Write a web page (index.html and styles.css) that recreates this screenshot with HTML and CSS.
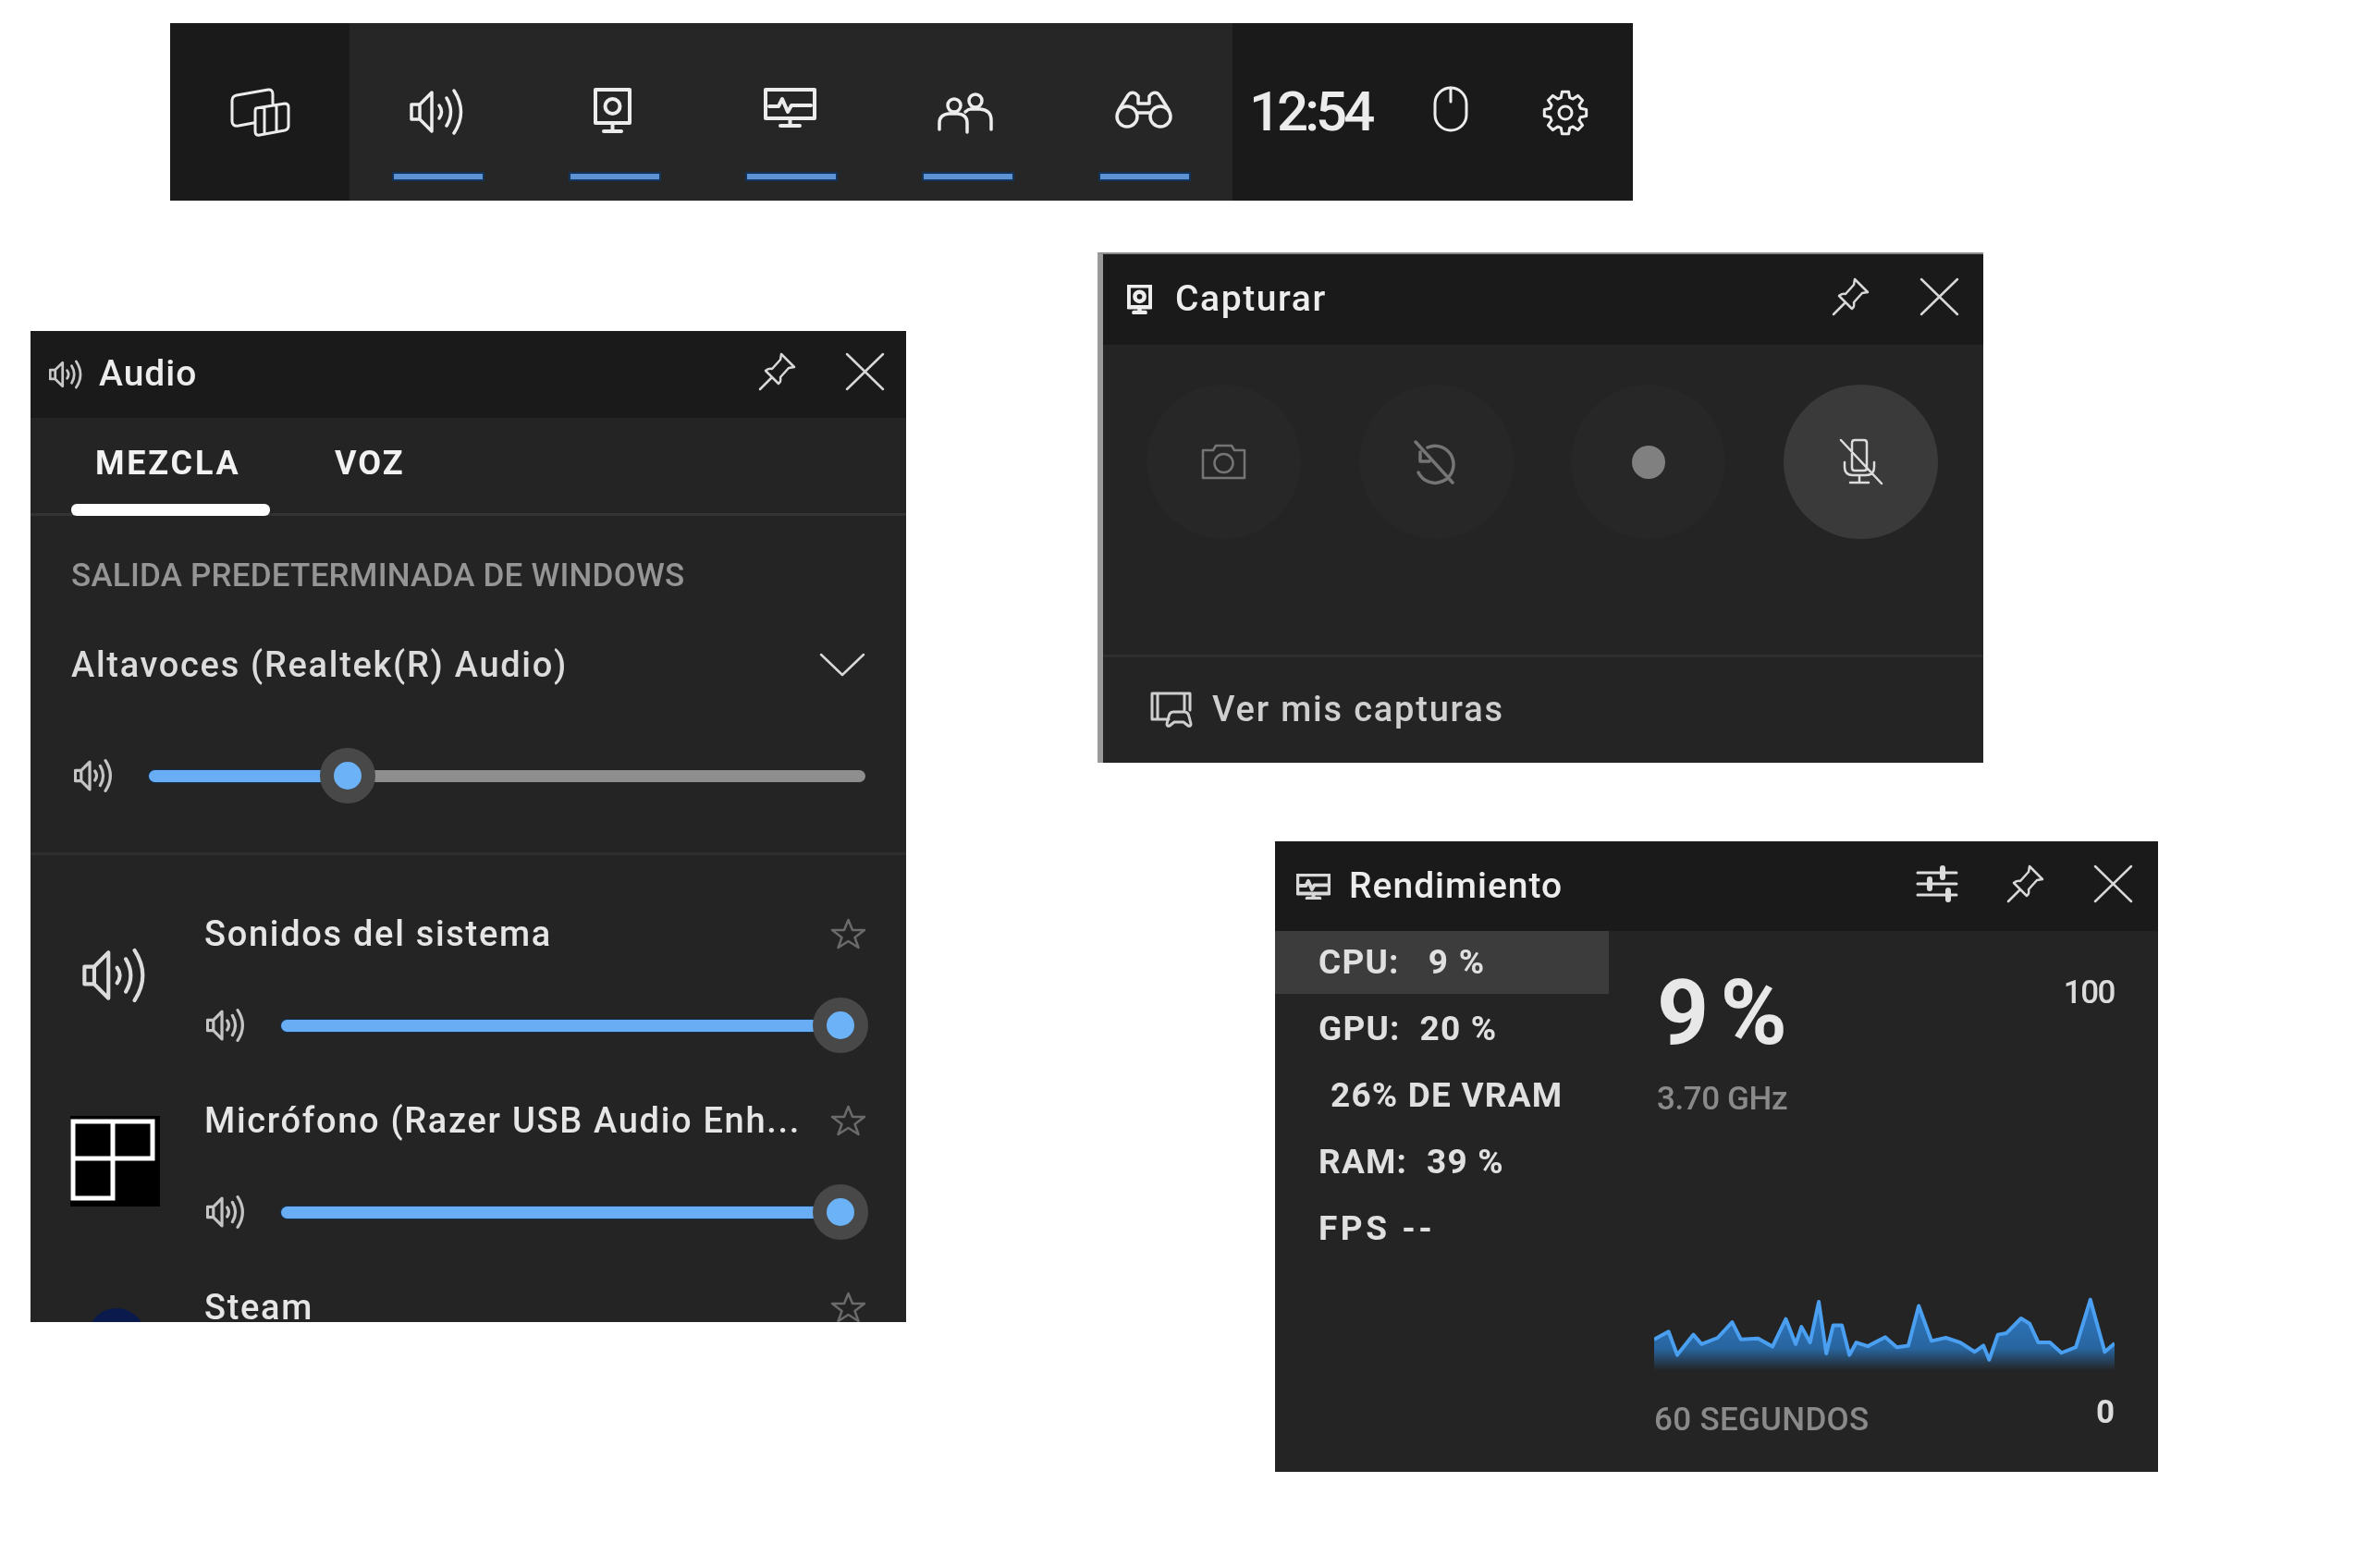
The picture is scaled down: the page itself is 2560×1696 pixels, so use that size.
FILE: index.html
```html
<!DOCTYPE html>
<html>
<head>
  <meta charset="utf-8">
  <title>Game Bar</title>
  <link rel="stylesheet" href="styles.css">
</head>
<body>
  <svg class="icon-defs" width="0" height="0">
    <symbol id="speaker" viewBox="0 0 62 52"><path d="M2 18h9L24 5v42L11 34H2zM11 18v16M32 19q5 7 0 14M40 11q9 15 0 30M48 3q15 23 0 46"/></symbol>
    <symbol id="pin" viewBox="0 0 41 42"><path d="M25 2l14 14-6 1-9 10q1 5-2 7L8 20q3-3 7-2l9-10zM14 28L2 40"/></symbol>
    <symbol id="close" viewBox="0 0 43 42"><path d="M2 2l39 38M41 2L2 40"/></symbol>
    <symbol id="star" viewBox="0 0 39 34"><path d="M19.5 2l4.5 11h13l-10.500 8 4 11-11-7-11 7 4-11L2 13h13z"/></symbol>
    <symbol id="monitor" viewBox="0 0 41 50"><path d="M2 2h37v36H2zM20.500 38v8M11 47h19"/><circle cx="20.500" cy="20" r="8"/></symbol>
    <symbol id="pulse" viewBox="0 0 57 43"><path d="M2 2h53v31H2zM28.500 33v6M18 41h21M6 20h10l4-8 6 14 4-7h21"/></symbol>
  </svg>

  <div class="bar">
    <div class="bar-home">
      <svg class="ico ico-home" viewBox="0 0 65 53"><path d="M26 38l-16 3q-7 1-7-5V14q0-5 5-6l34-6q5-.5 5 5v10M29 22l31-5q4 0 4 4v20q0 4-4 5l-27 5q-5 1-5-4V26q0-4 1-4zM38 21v28M51 19v28"/></svg>
    </div>
    <div class="bar-tabs">
      <div class="bar-tab"><svg class="ico ico-speaker"><use href="#speaker"/></svg></div>
      <div class="bar-tab"><svg class="ico ico-monitor"><use href="#monitor"/></svg></div>
      <div class="bar-tab"><svg class="ico ico-pulse"><use href="#pulse"/></svg></div>
      <div class="bar-tab">
        <svg class="ico ico-people" viewBox="0 0 60 43"><circle cx="18" cy="14" r="7"/><circle cx="41" cy="9" r="7"/><path d="M2 40v-7q0-9 10-10h10q10 1 10 10v10M30 21q3-3 6-3h10q12 1 12 12v10"/></svg>
      </div>
      <div class="bar-tab">
        <svg class="ico ico-binoc" viewBox="0 0 62 41"><circle cx="13" cy="28" r="11"/><circle cx="49" cy="28" r="11"/><path d="M4 21L14 5q3-4 8-2l3 3v8M58 21L48 5q-3-4-8-2l-3 3v8M25 14h12M24 24h14"/></svg>
      </div>
    </div>
    <div class="bar-side">
      <span class="clock">12:54</span>
      <svg class="ico ico-mouse" viewBox="0 0 38 50"><rect x="2" y="2" width="34" height="46" rx="17"/><path d="M19 2v15"/></svg>
      <svg class="ico ico-gear" viewBox="0 0 50 50"><path d="M20.300 8.700L21.400 2.300H28.600L29.700 8.700L33.200 10.100L38.500 6.400L43.600 11.500L39.900 16.800L41.300 20.300L47.700 21.400V28.600L41.300 29.700L39.900 33.200L43.600 38.500L38.500 43.600L33.200 39.900L29.700 41.300L28.600 47.700H21.400L20.300 41.300L16.800 39.900L11.500 43.600L6.400 38.500L10.100 33.200L8.700 29.700L2.300 28.600V21.400L8.700 20.300L10.100 16.800L6.400 11.500L11.500 6.400L16.800 10.100z"/><circle cx="25" cy="25" r="7"/></svg>
    </div>
  </div>

  <div class="win audio">
    <div class="win-head">
      <svg class="ico ico-title-speaker"><use href="#speaker"/></svg>
      <span class="win-title">Audio</span>
      <div class="win-actions">
        <svg class="ico ico-pin"><use href="#pin"/></svg>
        <svg class="ico ico-close"><use href="#close"/></svg>
      </div>
    </div>

    <div class="tabs">
      <div class="tab tab-active">MEZCLA</div>
      <div class="tab">VOZ</div>
    </div>

    <div class="output">
      <div class="output-label">SALIDA PREDETERMINADA DE WINDOWS</div>
      <div class="output-device">
        <span>Altavoces (Realtek(R) Audio)</span>
        <svg class="ico ico-chevron" viewBox="0 0 50 26"><path d="M2 2l23 22L48 2"/></svg>
      </div>
      <div class="slider slider-master">
        <svg class="ico ico-vol"><use href="#speaker"/></svg>
        <div class="track">
          <div class="track-fill" style="width: 27.7%"></div>
          <div class="thumb" style="left: 27.7%"></div>
        </div>
      </div>
    </div>

    <div class="apps">
      <div class="app">
        <svg class="ico app-icon app-icon-speaker"><use href="#speaker"/></svg>
        <div class="app-body">
          <div class="app-name"><span>Sonidos del sistema</span><svg class="ico ico-star"><use href="#star"/></svg></div>
          <div class="slider">
            <svg class="ico ico-vol"><use href="#speaker"/></svg>
            <div class="track"><div class="track-fill" style="width: 100%"></div><div class="thumb" style="left: 100%"></div></div>
          </div>
        </div>
      </div>
      <div class="app">
        <svg class="app-icon app-icon-tile" viewBox="0 0 97 98"><rect width="97" height="98" fill="#000"/><path d="M3 6h43v40H3zM46 6h43v40H46zM3 46h43v43H3z" fill="none" stroke="#fff" stroke-width="5"/></svg>
        <div class="app-body">
          <div class="app-name"><span>Micrófono (Razer USB Audio Enh...</span><svg class="ico ico-star"><use href="#star"/></svg></div>
          <div class="slider">
            <svg class="ico ico-vol"><use href="#speaker"/></svg>
            <div class="track"><div class="track-fill" style="width: 100%"></div><div class="thumb" style="left: 100%"></div></div>
          </div>
        </div>
      </div>
      <div class="app">
        <div class="app-icon app-icon-steam"></div>
        <div class="app-body">
          <div class="app-name"><span>Steam</span><svg class="ico ico-star"><use href="#star"/></svg></div>
        </div>
      </div>
    </div>
  </div>

  <div class="win capture">
    <div class="win-head">
      <svg class="ico ico-title-capture"><use href="#monitor"/></svg>
      <span class="win-title">Capturar</span>
      <div class="win-actions">
        <svg class="ico ico-pin"><use href="#pin"/></svg>
        <svg class="ico ico-close"><use href="#close"/></svg>
      </div>
    </div>
    <div class="capture-btns">
      <div class="round-btn">
        <svg class="ico ico-dim ico-camera" viewBox="0 0 49 39"><path d="M2 7h11l3-5h17l3 5h11v30H2z"/><circle cx="24.500" cy="21" r="10"/></svg>
      </div>
      <div class="round-btn">
        <svg class="ico ico-dim ico-replay" viewBox="0 0 50 48"><path d="M16 8a20 20 0 1 1-10 27M3 2l40 44M8 13v10h10"/></svg>
      </div>
      <div class="round-btn"><div class="rec-dot"></div></div>
      <div class="round-btn round-btn-on">
        <svg class="ico ico-mic" viewBox="0 0 47 49"><path d="M14 4q0-3 3-3h10q3 0 3 3v27q0 3-3 3H17q-3 0-3-3zM6 25v5q0 9 9 9h14q9 0 9-9v-5M22 39v7M12 47h20M2 1l44 47"/></svg>
      </div>
    </div>
    <div class="capture-foot">
      <svg class="ico ico-gallery" viewBox="0 0 45 39"><path d="M20 30H2V2h41v18M8 2v28M37 2v18M31 22h-6q-4 0-5 5l-2 8q0 3 3 2l5-4h10l5 4q3 1 3-2l-2-8q-1-5-5-5z"/></svg>
      <span>Ver mis capturas</span>
    </div>
  </div>

  <div class="win perf">
    <div class="win-head">
      <svg class="ico ico-title-pulse"><use href="#pulse"/></svg>
      <span class="win-title">Rendimiento</span>
      <div class="win-actions">
        <svg class="ico ico-tune" viewBox="0 0 44 40"><path d="M1 8h42M1 20h42M1 32h42"/><path class="tune-knob" d="M28 3v10M14 15v10M34 27v10"/></svg>
        <svg class="ico ico-pin"><use href="#pin"/></svg>
        <svg class="ico ico-close"><use href="#close"/></svg>
      </div>
    </div>
    <div class="perf-body">
      <div class="perf-list">
        <div class="perf-row perf-row-on">CPU:&nbsp;&nbsp; 9 %</div>
        <div class="perf-row">GPU:&nbsp; 20 %</div>
        <div class="perf-row perf-row-sub">26% DE VRAM</div>
        <div class="perf-row">RAM:&nbsp; 39 %</div>
        <div class="perf-row perf-row-fps">FPS --</div>
      </div>
      <div class="perf-main">
        <div class="perf-top">
          <div>
            <div class="perf-value">9 %</div>
            <div class="perf-freq">3.70 GHz</div>
          </div>
          <div class="perf-max">100</div>
        </div>
        <svg class="chart" viewBox="670 540 797 260" preserveAspectRatio="none">
          <defs>
            <linearGradient id="chartFade" x1="0" y1="0" x2="0" y2="1">
              <stop offset="0" stop-color="#2f79c6"/>
              <stop offset=".62" stop-color="#28659f"/>
              <stop offset=".9" stop-color="#242424"/>
            </linearGradient>
          </defs>
          <path fill="url(#chartFade)" d="M670 800V675L695 650 710 725 738 660 752 690 780 670 805 620 820 675 850 672 875 698 898 610 915 690 925 635 940 685 955 555 968 720 980 630 995 630 1008 725 1020 685 1040 697 1070 668 1090 700 1110 695 1128 568 1150 680 1175 670 1200 685 1225 715 1240 695 1250 740 1265 660 1280 655 1305 608 1320 625 1335 685 1355 685 1375 718 1400 700 1425 548 1450 715 1467 688V800z"/>
          <path class="chart-line" d="M670 675L695 650 710 725 738 660 752 690 780 670 805 620 820 675 850 672 875 698 898 610 915 690 925 635 940 685 955 555 968 720 980 630 995 630 1008 725 1020 685 1040 697 1070 668 1090 700 1110 695 1128 568 1150 680 1175 670 1200 685 1225 715 1240 695 1250 740 1265 660 1280 655 1305 608 1320 625 1335 685 1355 685 1375 718 1400 700 1425 548 1450 715 1467 688"/>
        </svg>
        <div class="perf-foot">
          <span class="perf-span">60 SEGUNDOS</span>
          <span class="perf-min">0</span>
        </div>
      </div>
    </div>
  </div>
</body>
</html>
```

FILE: styles.css
```css
body {
  margin: 0;
  height: 1696px;
  position: relative;
  overflow: hidden;
  background: #fff;
  font-family: Roboto, "Liberation Sans", sans-serif;
  font-size: 38px;
  font-weight: 500;
  color: #e6e6e6;
}

.icon-defs {
  position: absolute;
}

.ico {
  display: block;
  flex: none;
  fill: none;
  stroke: currentColor;
  stroke-width: 3;
  stroke-linecap: round;
  stroke-linejoin: round;
  overflow: visible;
}

/* top bar */
.bar {
  position: absolute;
  left: 184px;
  top: 25px;
  width: 1582px;
  height: 192px;
  display: flex;
  background: #1a1a1a;
  color: #ececec;
  filter: blur(.6px);
}

.bar-home {
  width: 194px;
  display: flex;
  justify-content: center;
  padding-top: 70px;
  box-sizing: border-box;
}

.ico-home { width: 65px; height: 53px; margin-left: -2px; }

.bar-tabs {
  display: flex;
  background: #262626;
}

.bar-tab {
  width: 191px;
  box-sizing: border-box;
  padding-top: 70px;
  position: relative;
  display: flex;
  justify-content: center;
}

.bar-tab::after {
  content: "";
  position: absolute;
  left: 48px;
  top: 163px;
  width: 96px;
  height: 6px;
  background: #5d93d2;
  box-shadow: 0 0 0 2px #12335a;
}

.ico-speaker { width: 62px; height: 52px; stroke-width: 3.500; }
.ico-monitor { width: 41px; height: 50px; margin-left: -4px; stroke-width: 4; }
.ico-pulse { width: 57px; height: 43px; margin-left: -3px; stroke-width: 4; }
.ico-people { width: 60px; height: 43px; margin: 5px 0 0 -6px; stroke-width: 3.500; }
.ico-binoc { width: 62px; height: 41px; margin: 3px 0 0 -2px; stroke-width: 3.500; }

.bar-side {
  flex: 1;
  display: flex;
  align-items: flex-start;
}

.clock {
  margin: 61px 0 0 18px;
  font-size: 60px;
  line-height: 70px;
  letter-spacing: -4px;
}

.ico-mouse {
  width: 38px;
  height: 50px;
  margin: 68px 0 0 67px;
}

.ico-gear {
  width: 50px;
  height: 50px;
  margin: 72px 0 0 80px;
}

/* windows */
.win {
  position: absolute;
  background: #242424;
  overflow: hidden;
  filter: blur(.6px);
}

.win-head {
  display: flex;
  align-items: center;
  background: #1a1a1a;
  color: #ededed;
}

.win-title {
  margin-bottom: 2px;
  font-size: 39px;
  line-height: 44px;
  letter-spacing: 1px;
}

.win-actions {
  margin-left: auto;
  margin-bottom: 6px;
  display: flex;
  align-items: center;
  gap: 53px;
}

.ico-pin { width: 41px; height: 42px; stroke-width: 2.500; color: #d8d8d8; }
.ico-close { width: 43px; height: 42px; stroke-width: 2.500; color: #d8d8d8; }

/* audio */
.audio {
  left: 33px;
  top: 358px;
  width: 947px;
  height: 1072px;
}

.audio .win-head {
  height: 94px;
  padding: 0 23px 0 20px;
}

.ico-title-speaker { width: 38px; height: 32px; margin-right: 16px; color: #c8c8c8; stroke-width: 4.500; }

.tabs {
  height: 106px;
  box-sizing: border-box;
  display: flex;
  padding-left: 44px;
  border-bottom: 3px solid #333;
}

.tab {
  position: relative;
  padding: 0 26px;
  line-height: 98px;
  font-size: 36px;
  font-weight: 700;
  letter-spacing: 2px;
  color: #f2f2f2;
}

.tab-active {
  width: 215px;
  box-sizing: border-box;
  margin-right: 44px;
  letter-spacing: 2.800px;
}

.tab-active::after {
  content: "";
  position: absolute;
  left: 0;
  right: 0;
  bottom: -3px;
  height: 13px;
  border-radius: 6px;
  background: #fff;
}

.output {
  padding: 43px 44px 53px;
  border-bottom: 3px solid #2e2e2e;
}

.output-label {
  line-height: 44px;
  font-size: 35px;
  letter-spacing: .2px;
  color: #959595;
}

.output-device {
  margin-top: 52px;
  display: flex;
  align-items: center;
  justify-content: space-between;
  line-height: 44px;
  letter-spacing: 1.700px;
  color: #dcdcdc;
}

.ico-chevron { width: 50px; height: 26px; stroke-width: 2.500; color: #d8d8d8; }

.slider {
  display: flex;
  align-items: center;
  height: 60px;
}

.slider-master {
  margin-top: 68px;
  padding-left: 3px;
}

.ico-vol {
  width: 44px;
  height: 38px;
  margin-right: 37px;
  stroke-width: 4.500;
  color: #c4c4c4;
}

.track {
  flex: 1;
  position: relative;
  height: 13px;
  border-radius: 7px;
  background: #8e8e8e;
}

.track-fill {
  height: 100%;
  border-radius: 7px;
  background: #69aef5;
  box-shadow: 0 0 0 1px #14304f;
}

.thumb {
  position: absolute;
  top: 50%;
  width: 30px;
  height: 30px;
  margin: -30px 0 0 -30px;
  border: 15px solid #484848;
  border-radius: 50%;
  background: #6cb2f7;
}

.apps {
  padding: 63px 43px 0 44px;
}

.app {
  display: flex;
  height: 202px;
}

.app-icon {
  flex: none;
  margin-right: auto;
}

.app-icon-speaker { width: 73px; height: 64px; margin-top: 35px; margin-left: 12px; stroke-width: 3.500; color: #dcdcdc; }
.app-icon-tile { display: block; width: 97px; height: 98px; margin-top: 17px; margin-left: -1px; }
.app-icon-steam { width: 62px; height: 62px; margin-top: 23px; margin-left: 18px; border-radius: 50%; background: #0b1a4d; }

.app-body {
  width: 716px;
  flex: none;
}

.app-name {
  display: flex;
  align-items: center;
  justify-content: space-between;
  line-height: 44px;
  letter-spacing: 1.700px;
  color: #e6e6e6;
}

.ico-star { width: 39px; height: 34px; stroke-width: 2.500; color: #6a6a6a; }

.app .slider {
  margin-top: 47px;
  padding-left: 2px;
  padding-right: 28px;
}

/* capture */
.capture {
  left: 1187px;
  top: 273px;
  width: 958px;
  height: 552px;
  box-sizing: border-box;
  border-left: 6px solid #9a9a9a;
  border-top: 2px solid #8a8a8a;
}

.capture::before {
  content: "";
  position: absolute;
  left: -6px;
  top: 115px;
  width: 6px;
  height: 192px;
  background: #1a1a1a;
}

.capture .win-head {
  height: 98px;
  padding: 0 26px;
}

.capture .win-title { letter-spacing: 1.600px; }
.ico-title-capture { width: 27px; height: 32px; margin-right: 25px; stroke-width: 7; }
.capture .win-actions { gap: 54px; }

.capture-btns {
  height: 338px;
  box-sizing: border-box;
  padding: 43px 0 0 47px;
  display: flex;
  align-items: flex-start;
  gap: 62.500px;
  border-bottom: 3px solid #2e2e2e;
}

.round-btn {
  width: 167px;
  height: 167px;
  flex: none;
  display: flex;
  align-items: center;
  justify-content: center;
  border-radius: 50%;
  background: #272727;
}

.round-btn-on {
  background: #3a3a3a;
}

.ico-dim { color: #757575; stroke-width: 2.500; }
.ico-camera { width: 49px; height: 39px; }
.ico-replay { width: 50px; height: 48px; stroke-width: 3.500; }

.rec-dot {
  width: 36px;
  height: 36px;
  border-radius: 50%;
  background: #808080;
}

.ico-mic { width: 47px; height: 49px; stroke-width: 2.500; color: #dcdcdc; }

.capture-foot {
  display: flex;
  align-items: center;
  gap: 22px;
  height: 112px;
  padding-left: 51px;
  letter-spacing: 1.800px;
  color: #cfcfcf;
}

.ico-gallery { width: 45px; height: 39px; }

/* performance */
.perf {
  left: 1379px;
  top: 910px;
  width: 955px;
  height: 682px;
}

.perf .win-head {
  height: 97px;
  padding: 0 27px 0 23px;
}

.ico-title-pulse { width: 37px; height: 28px; margin-right: 20px; stroke-width: 6; color: #d8d8d8; }
.ico-tune { width: 44px; height: 40px; color: #dcdcdc; }
.tune-knob { stroke-width: 6; }

.perf-body {
  display: flex;
}

.perf-list {
  width: 361px;
  flex: none;
}

.perf-row {
  height: 72px;
  padding-left: 47px;
  line-height: 72px;
  font-size: 37px;
  font-weight: 700;
  letter-spacing: 1.200px;
  color: #e0e0e0;
}

.perf-row-on {
  height: 68px;
  line-height: 68px;
  margin-bottom: 2px;
  background: #3c3c3c;
}

.perf-row-sub {
  padding-left: 60px;
}

.perf-row-fps {
  letter-spacing: 3.500px;
}

.perf-main {
  flex: 1;
  padding: 0 47px 0 49px;
}

.perf-top {
  display: flex;
  justify-content: space-between;
}

.perf-value {
  margin: 39px 0 0 3px;
  font-size: 98px;
  line-height: 100px;
  font-weight: 700;
  letter-spacing: -3px;
  word-spacing: -6px;
  color: #e8e8e8;
}

.perf-freq {
  margin: 21px 0 0 3px;
  line-height: 44px;
  font-size: 35px;
  letter-spacing: -.4px;
  color: #8a8a8a;
}

.perf-max {
  margin-top: 47px;
  line-height: 40px;
  font-size: 35px;
  letter-spacing: -1.500px;
  color: #dcdcdc;
}

.chart {
  display: block;
  width: 498px;
  height: 88px;
  margin-top: 192px;
}

.chart-line {
  fill: none;
  stroke: #4a9ff0;
  stroke-width: 4;
  stroke-linejoin: round;
  vector-effect: non-scaling-stroke;
}

.perf-foot {
  display: flex;
  justify-content: space-between;
  align-items: flex-start;
  margin-top: 17px;
  line-height: 40px;
  font-size: 35px;
}

.perf-span {
  padding-top: 8px;
  letter-spacing: .3px;
  color: #8a8a8a;
}

.perf-min {
  color: #dcdcdc;
  font-weight: 700;
}
```
